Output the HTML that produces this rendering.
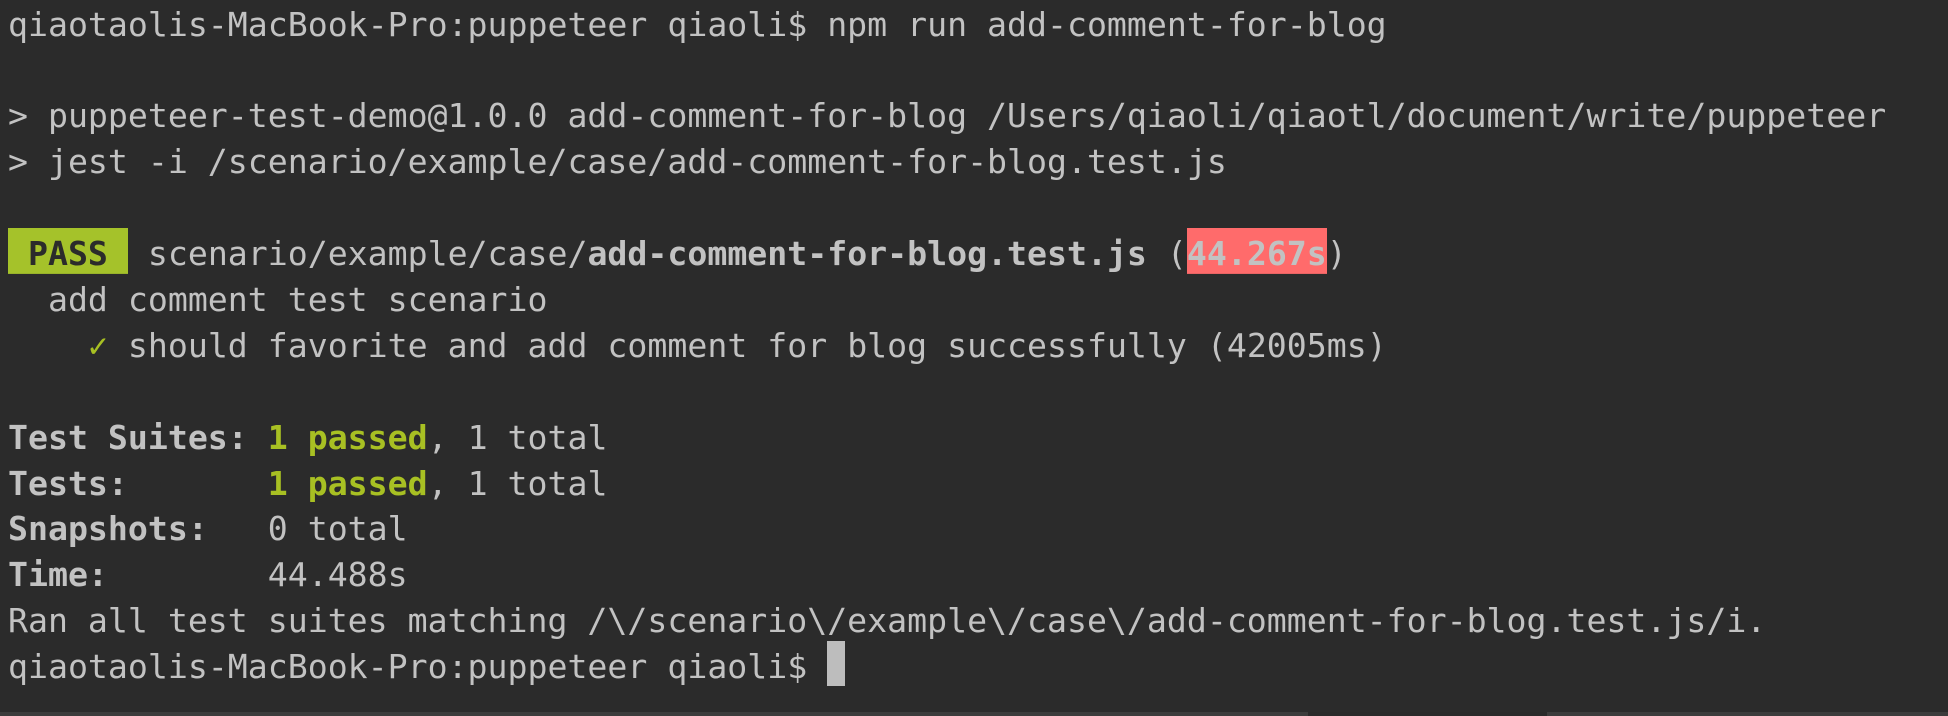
<!DOCTYPE html>
<html><head><meta charset="utf-8"><style>
html,body{margin:0;padding:0;}
body{width:1948px;height:716px;background:#2b2b2b;overflow:hidden;position:relative;}
pre{margin:0;position:absolute;left:8px;top:1.5px;font-family:"DejaVu Sans Mono","Liberation Mono",monospace;font-size:33.2px;line-height:45.9px;color:#c2c2c2;white-space:pre;}
b{font-weight:bold;}
.pass{background:linear-gradient(#a5c22a,#a5c22a) 0 0/100% 42.9px no-repeat;box-shadow:0 -3px 0 #a5c22a;color:#2b2b2b;font-weight:bold;display:inline-block;height:45.9px;}
.hl{background:linear-gradient(#ff6b6b,#ff6b6b) 0 0/100% 42.9px no-repeat;box-shadow:0 -3px 0 #ff6b6b;font-weight:bold;display:inline-block;height:45.9px;}
.g{color:#a8c023;font-weight:bold;}
.ck{color:#a8c023;}
.cur{display:inline-block;width:18px;height:45px;background:#bdbdbd;vertical-align:top;position:relative;top:-3px;}
.bar{position:absolute;left:0;top:712px;width:1948px;height:4px;background:#3c3c3c;}
.bar2{position:absolute;left:1308px;top:712px;width:239px;height:4px;background:#2a2a2a;}
</style></head><body>
<pre>qiaotaolis-MacBook-Pro:puppeteer qiaoli$ npm run add-comment-for-blog

&gt; puppeteer-test-demo@1.0.0 add-comment-for-blog /Users/qiaoli/qiaotl/document/write/puppeteer
&gt; jest -i /scenario/example/case/add-comment-for-blog.test.js

<span class="pass"> PASS </span> scenario/example/case/<b>add-comment-for-blog.test.js</b> (<span class="hl">44.267s</span>)
  add comment test scenario
    <span class="ck">✓</span> should favorite and add comment for blog successfully (42005ms)

<b>Test Suites: </b><span class="g">1 passed</span>, 1 total
<b>Tests:       </b><span class="g">1 passed</span>, 1 total
<b>Snapshots:   </b>0 total
<b>Time:        </b>44.488s
Ran all test suites matching /\/scenario\/example\/case\/add-comment-for-blog.test.js/i.
qiaotaolis-MacBook-Pro:puppeteer qiaoli$ <span class="cur"></span></pre>
<div class="bar"></div><div class="bar2"></div>
</body></html>
